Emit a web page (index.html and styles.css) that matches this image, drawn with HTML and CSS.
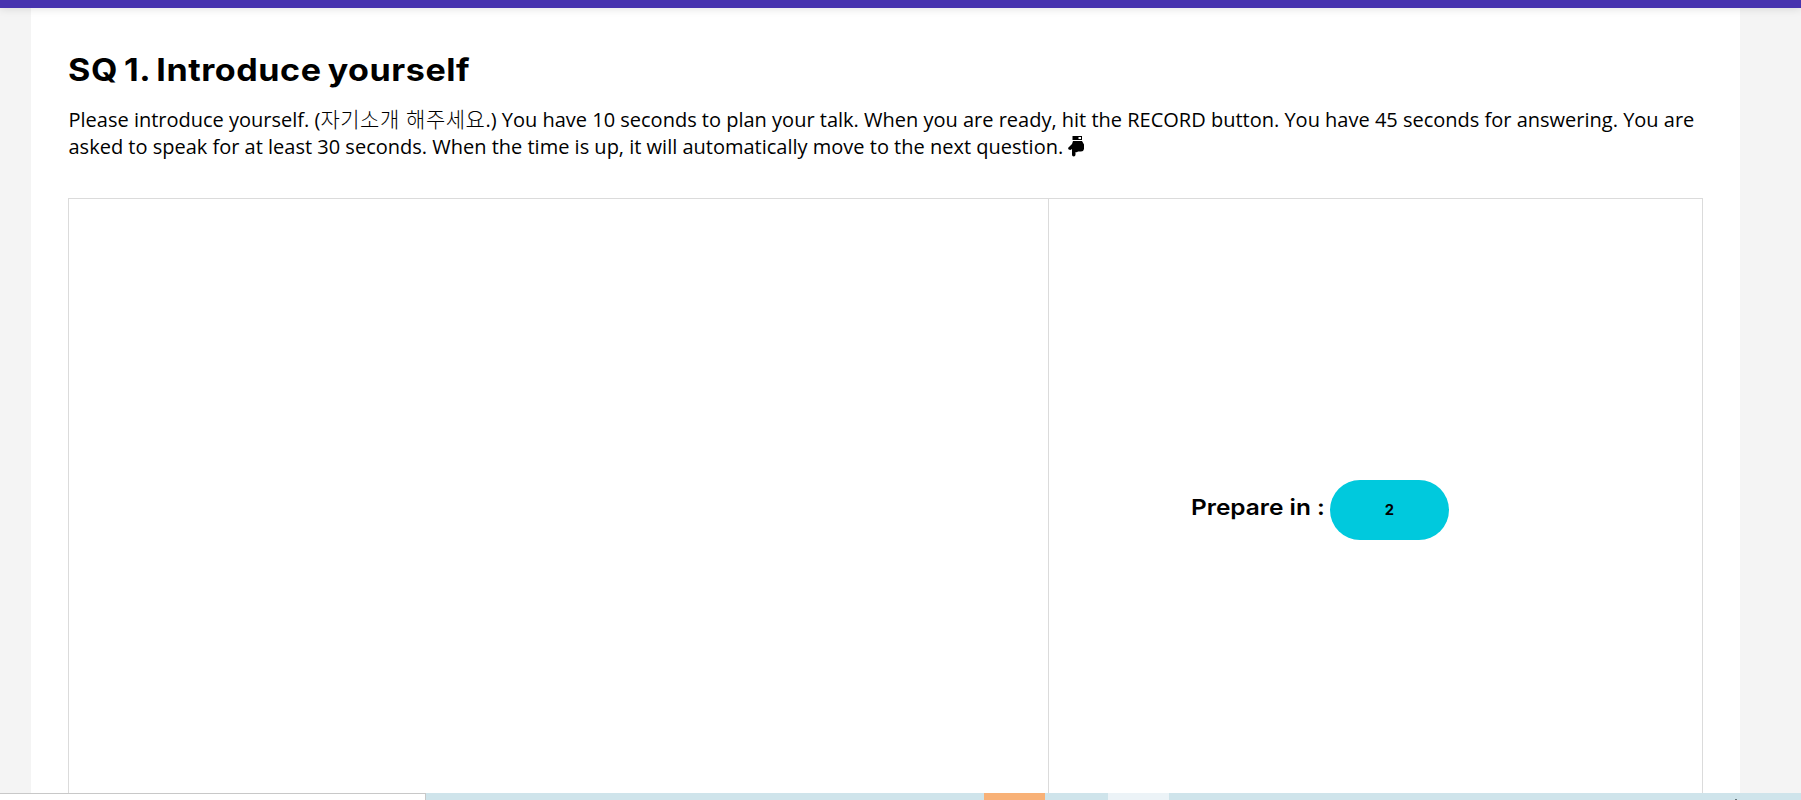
FILE: index.html
```
<!DOCTYPE html>
<html lang="en">
<head>
<meta charset="utf-8">
<title>SQ 1. Introduce yourself</title>
<link rel="stylesheet" href="styles.css">
</head>
<body>
<header class="topbar"></header>
<main class="page">
  <h1 class="title">SQ 1. Introduce yourself</h1>
  <p class="intro">Please introduce yourself. (<span class="korean" lang="ko">자기소개 해주세요</span>.) You have 10 seconds to plan your talk. When you are ready, hit the RECORD button. You have 45 seconds for answering. You are<br>asked to speak for at least 30 seconds. When the time is up, it will automatically move to the next question. <svg class="hand" viewBox="0 0 16 21" aria-hidden="true"><path fill-rule="evenodd" d="M4.5 0H14V4H4.5ZM10.5 1V3H13V1ZM5 5H14L16 8.5V13Q15.5 15.5 13 15.5H10Q9 16.5 7.5 16V18.5Q7.5 20.5 5.7 20.5T4 18.5V13L2.5 14Q0 14 0 12L4 8Z"/></svg></p>
  <section class="panel">
    <div class="media"></div>
    <div class="timer"><span class="label">Prepare in :</span><span class="pill"><span class="count">2</span></span></div>
  </section>
</main>
<footer class="taskbar"><div class="tab"></div><div class="orange"></div><div class="light"></div><div class="mark"></div></footer>
</body>
</html>
```
FILE: styles.css
```
* { box-sizing: border-box; }
body { margin: 0; height: 800px; overflow: hidden; display: flex; flex-direction: column; background: #f4f4f4; color: #000; font-family: "Open Sans", "Noto Sans CJK KR", sans-serif; }
.topbar { position: relative; height: 8px; flex: none; background: #4733af; box-shadow: 0 1px 8px rgba(0,0,0,.12); }
.page { flex: 1; min-height: 0; width: 1709px; margin-left: 31px; padding: 42px 37px 0; background: #fff; display: flex; flex-direction: column; }
.title { margin: 0; height: 56px; font: 700 31px/39px Inter, sans-serif; letter-spacing: .5px; word-spacing: -2.3px; white-space: nowrap; transform: scaleX(1.1); transform-origin: 0 0; }
.intro { margin: 0 0 0 .5px; height: 92px; font-size: 20px; line-height: 27px; white-space: nowrap; }
.korean { font-family: "Noto Sans CJK KR", sans-serif; font-size: 21px; font-weight: 300; line-height: 1; letter-spacing: .5px; }
.hand { width: 16px; height: 21px; vertical-align: -3px; }
.panel { flex: 1; min-height: 0; width: 1635px; display: grid; grid-template-columns: 980px 1fr; border: 1px solid #dbdbdb; border-bottom: 0; }
.media { border-right: 1px solid #dbdbdb; }
.timer { display: flex; align-items: flex-start; padding: 281px 0 0 281px; }
.label { width: 139px; margin-left: -139px; font: 600 22px/54px Inter, sans-serif; white-space: nowrap; transform: scaleX(1.11); transform-origin: 0 0; }
.pill { width: 119px; height: 60px; border-radius: 30px; background: #00c9dd; font: 700 14px/60px Inter, sans-serif; text-align: center; }
.count { display: inline-block; transform: scaleX(1.05); }
.taskbar { height: 7px; flex: none; display: flex; background: #cfe4eb; }
.tab { width: 426px; border: 1px solid #c8c8c8; border-width: 1px 1px 0 0; background: #fff; }
.orange { width: 61px; margin-left: 558px; background: #f8b177; }
.light { width: 61px; margin-left: 63px; background: #ecf3f7; }
.mark { width: 2px; height: 1px; margin: 6px 0 0 566px; background: #65747a; }
```
